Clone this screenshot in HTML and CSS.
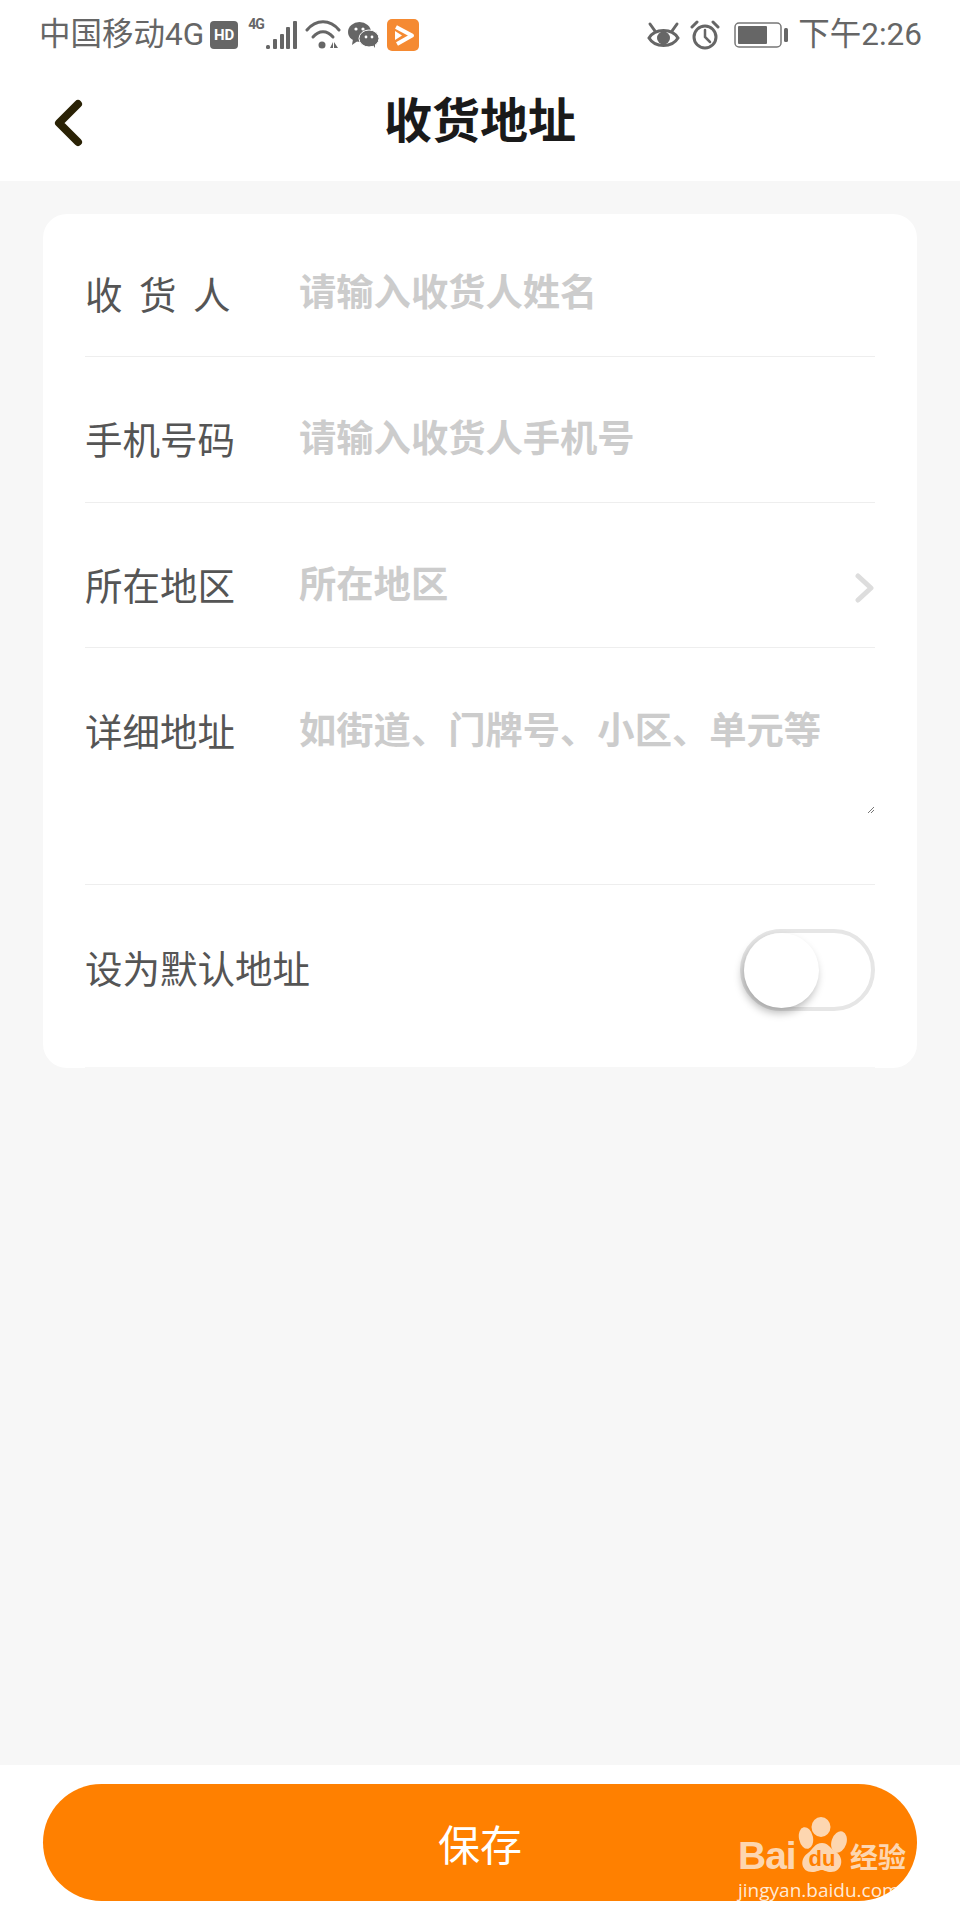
FILE: index.html
```html
<!DOCTYPE html>
<html lang="zh-CN">
<head>
  <meta charset="UTF-8">
  <meta name="viewport" content="width=device-width, initial-scale=1.0">
  <title>收货地址</title>
  <link rel="stylesheet" href="styles.css">
</head>
<body>
  <div class="page">
    <header class="top">
      <div class="status">
        <div class="status-left">
          <span class="carrier">中国移动4G</span>
          <span class="hd">HD</span>
          <span class="net">4G</span>
          <svg class="signal" width="31" height="28" viewBox="0 0 31 28"><g fill="#666"><rect x="0" y="24" width="4" height="4" rx="1.500"/><rect x="7" y="18" width="4" height="10" rx="1"/><rect x="14" y="13" width="4" height="15" rx="1"/><rect x="20" y="6" width="4" height="22" rx="1"/><rect x="27" y="0" width="4" height="28" rx="1"/></g></svg>
          <svg class="wifi" width="36" height="29" viewBox="0 0 36 29"><g fill="none" stroke="#666" stroke-width="3" stroke-linecap="round"><path d="M2 10 C11 -1 25 -1 34 10"/><path d="M8 17 C14 10 22 10 28 17"/></g><circle cx="17" cy="25" r="3.500" fill="#666"/><path d="M25 28 L28 22 V28 Z M29 22 L33 28 H29 Z" fill="#666"/></svg>
          <svg class="wechat" width="31" height="26" viewBox="0 0 31 26"><ellipse cx="11.500" cy="10" rx="11.500" ry="10" fill="#666"/><path d="M5 17 L4 23 L11 18 Z" fill="#666"/><ellipse cx="21" cy="16.500" rx="10" ry="8.500" fill="#666" stroke="#fff" stroke-width="1"/><path d="M25 23 L27 26 L27 20 Z" fill="#666"/><circle cx="8" cy="7" r="1.600" fill="#fff"/><circle cx="15" cy="7" r="1.600" fill="#fff"/><circle cx="18" cy="15" r="1.400" fill="#fff"/><circle cx="24" cy="15" r="1.400" fill="#fff"/></svg>
          <svg class="app" width="32" height="32" viewBox="0 0 32 32"><rect width="32" height="32" rx="5" fill="#f58a32"/><path d="M9 8 L25 16.500 L10 25" fill="none" stroke="#fff" stroke-width="4" stroke-linejoin="round"/><path d="M8 12 L15 16.500 L8 21 Z" fill="#fff"/></svg>
        </div>
        <div class="status-right">
          <svg width="33" height="29" viewBox="0 0 33 29"><g fill="none" stroke="#666" stroke-width="3" stroke-linecap="round"><path d="M2 18 C8 8 25 8 31 18 C25 28 8 28 2 18 Z"/><path d="M3 4 L8 11"/><path d="M30 4 L25 11"/></g><circle cx="16.500" cy="18" r="6.500" fill="#666"/></svg>
          <svg width="30" height="30" viewBox="0 0 30 30"><g fill="none" stroke="#666" stroke-width="3" stroke-linecap="round"><circle cx="15" cy="17" r="11"/><path d="M15 10 V17 L20 22" stroke-width="2.500"/><path d="M2 7 L7 2"/><path d="M28 7 L23 2"/></g></svg>
          <svg class="battery" width="54" height="26" viewBox="0 0 54 26"><rect x="1" y="1" width="46" height="24" rx="4" fill="none" stroke="#777" stroke-width="1.500"/><rect x="4" y="4" width="29" height="18" rx="1" fill="#666"/><rect x="50" y="6" width="4" height="14" rx="1.500" fill="#666"/></svg>
          <span class="clock">下午2:26</span>
        </div>
      </div>
      <div class="navbar">
        <svg class="back" width="34" height="48" viewBox="0 0 34 48"><path d="M27 5 L8 24 L27 43" fill="none" stroke="#2a2205" stroke-width="8" stroke-linecap="round" stroke-linejoin="round"/></svg>
        <h1 class="title">收货地址</h1>
      </div>
    </header>

    <main class="content">
      <section class="card">
        <div class="row row-first">
          <div class="label label-spaced">收货人</div>
          <div class="hint">请输入收货人姓名</div>
        </div>
        <div class="row">
          <div class="label">手机号码</div>
          <div class="hint">请输入收货人手机号</div>
        </div>
        <div class="row row-picker">
          <div class="label">所在地区</div>
          <div class="hint">所在地区</div>
          <svg class="arrow" width="20" height="30" viewBox="0 0 20 30"><path d="M3 3 L16 15 L3 27" fill="none" stroke="#ddd" stroke-width="5" stroke-linecap="round" stroke-linejoin="round"/></svg>
        </div>
        <div class="row row-area">
          <div class="label">详细地址</div>
          <div class="hint">如街道、门牌号、小区、单元等</div>
          <svg class="grip" width="8" height="8" viewBox="0 0 8 8"><path d="M1 7 L7 1 M4 7 L7 4" stroke="#777" stroke-width="1"/></svg>
        </div>
        <div class="row row-switch">
          <div class="label">设为默认地址</div>
          <div class="switch"><span class="knob"></span></div>
        </div>
      </section>
    </main>

    <footer class="bottom">
      <button class="save" type="button">保存</button>
      <div class="watermark">
        <div class="mark-logo">
          <span class="mark-bai">Bai</span>
          <svg class="paw" width="50" height="56" viewBox="0 0 50 56"><g fill="#fdd6b0"><ellipse cx="23" cy="10" rx="9.500" ry="10"/><ellipse cx="8" cy="21" rx="7" ry="11" transform="rotate(-12 8 21)"/><ellipse cx="41" cy="25" rx="7.500" ry="11" transform="rotate(18 41 25)"/><path d="M24 26 C30 26 32 31 38 35 C47 41 44 55 33 55 C28 55 26 53 24 53 C21 53 19 55 14 55 C3 55 1 42 10 36 C15 32 17 26 24 26 Z"/></g><text x="24" y="49" text-anchor="middle" class="paw-du">du</text></svg>
          <span class="mark-cn">经验</span>
        </div>
        <div class="mark-url">jingyan.baidu.com</div>
      </div>
    </footer>
  </div>
</body>
</html>
```

FILE: styles.css
```css
* {
  box-sizing: border-box;
}
body {
  margin: 0;
  font-family: "Noto Sans CJK SC", Roboto, sans-serif;
  background: #f7f7f7;
}
.page {
  display: flex;
  flex-direction: column;
  height: 1920px;
}
.top {
  background: #fff;
  height: 181px;
}
.status {
  display: flex;
  justify-content: space-between;
  align-items: center;
  height: 66px;
  padding: 3px 38px 0 39px;
  color: #666;
}
.status-left, .status-right {
  display: flex;
  align-items: center;
}
.carrier, .clock {
  font-family: Roboto, "Noto Sans CJK SC", sans-serif;
  font-size: 31.500px;
  line-height: 40px;
}
.hd {
  width: 28px;
  height: 28px;
  margin-left: 6px;
  border-radius: 4px;
  background: #666;
  color: #fff;
  font: bold 15px/28px Roboto, sans-serif;
  text-align: center;
}
.net {
  align-self: flex-start;
  margin: 2px 0 0 10px;
  font: bold 14px/14px Roboto, sans-serif;
  letter-spacing: -1px;
  color: #666;
}
.signal {
  margin-left: 2px;
}
.wifi {
  margin-left: 8px;
}
.wechat {
  margin-left: 7px;
}
.app {
  margin-left: 8px;
}
.status-right {
  gap: 10px;
}
.battery {
  margin-left: 4px;
}
.navbar {
  position: relative;
  display: flex;
  justify-content: center;
  align-items: center;
  height: 115px;
  padding-bottom: 14px;
}
.back {
  position: absolute;
  left: 51px;
  top: 33px;
}
.title {
  margin: 0;
  font-size: 48px;
  line-height: 60px;
  font-weight: 700;
  color: #1a1a1a;
}
.content {
  flex: 1;
  padding: 33px 43px 0;
}
.card {
  background: #fff;
  border-radius: 24px;
  padding: 0 42px;
  overflow: hidden;
}
.row {
  position: relative;
  display: flex;
  align-items: flex-start;
  height: 146px;
  padding-top: 54px;
  border-bottom: 1px solid #eee;
}
.row-first {
  height: 143px;
  padding-top: 51px;
}
.row-picker {
  height: 145px;
}
.row-area {
  height: 237px;
  padding-top: 55px;
}
.row-switch {
  align-items: center;
  justify-content: space-between;
  height: 183px;
  padding: 0 0 12px;
  border-bottom-color: #f7f7f7;
}
.label {
  width: 214px;
  padding-top: 2px;
  font-size: 37.500px;
  line-height: 50px;
  color: #555;
  white-space: nowrap;
}
.row-first .label {
  padding-top: 3px;
}
.row-switch .label {
  padding-top: 0;
  margin-bottom: 6px;
}
.label-spaced {
  letter-spacing: 16.500px;
}
.hint {
  flex: 1;
  font-size: 37.300px;
  line-height: 50px;
  font-weight: 700;
  color: #ccc;
}
.arrow {
  margin-top: 16px;
}
.grip {
  position: absolute;
  right: 0;
  bottom: 70px;
}
.switch {
  display: flex;
  align-items: center;
  width: 135px;
  height: 82px;
  border: 4px solid #e6e6e6;
  border-radius: 41px;
}
.knob {
  width: 75px;
  height: 75px;
  border-radius: 50%;
  background: #fff;
  box-shadow: -2px 5px 9px rgba(0, 0, 0, 0.28);
}
.bottom {
  position: relative;
  background: #fff;
  padding: 19px 43px;
}
.save {
  display: block;
  width: 100%;
  height: 117px;
  border: none;
  border-radius: 59px;
  background: #ff8000;
  color: #fff;
  font-family: "Noto Sans CJK SC", sans-serif;
  font-size: 42px;
}
.watermark {
  position: absolute;
  right: 54px;
  bottom: 19px;
  width: 168px;
}
.mark-logo {
  display: flex;
  align-items: flex-end;
  justify-content: space-between;
  color: #fdd6b0;
}
.mark-bai {
  font: bold 39px/34px "Liberation Sans", sans-serif;
  letter-spacing: -1px;
}
.paw-du {
  font: bold 22px "Liberation Sans", sans-serif;
  fill: #ff8000;
}
.mark-cn {
  font-size: 28px;
  line-height: 34px;
  font-weight: 700;
}
.mark-url {
  margin-top: 6px;
  font: 19px/22px "Open Sans", sans-serif;
  color: rgba(255, 255, 255, 0.85);
  white-space: nowrap;
}
```
